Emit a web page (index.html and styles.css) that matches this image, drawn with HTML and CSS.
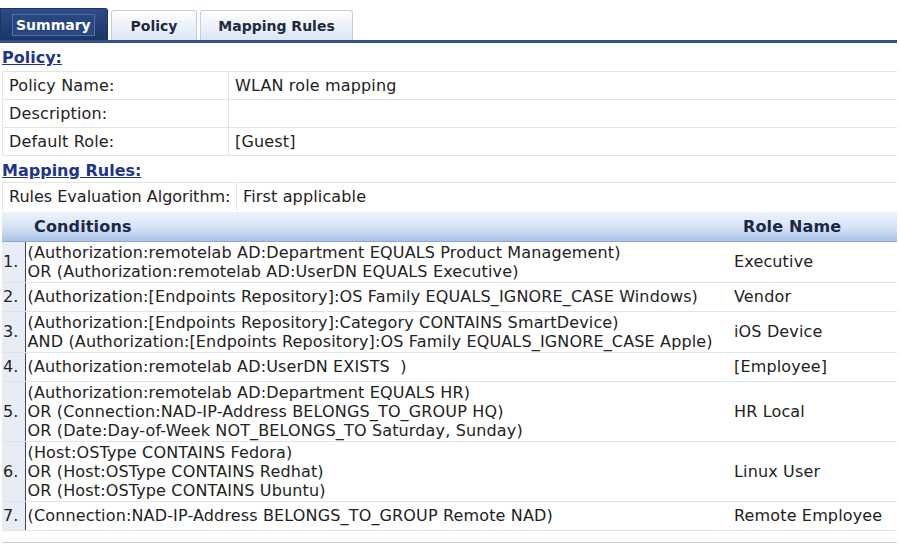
FILE: index.html
```html
<!DOCTYPE html>
<html lang="en">
<head>
  <meta charset="UTF-8" />
  <title>Authorization Policy – Summary</title>
  <link rel="stylesheet" href="styles.css">
</head>
<body>
  <div class="tabs">
    <div class="tab active"><span>Summary</span></div>
    <div class="tab">Policy</div>
    <div class="tab">Mapping Rules</div>
  </div>

  <h3 class="section-title">Policy:</h3>
  <table class="props">
    <tr><td class="label">Policy Name:</td><td>WLAN role mapping</td></tr>
    <tr><td class="label">Description:</td><td></td></tr>
    <tr><td class="label">Default Role:</td><td>[Guest]</td></tr>
  </table>

  <h3 class="section-title">Mapping Rules:</h3>
  <table class="props algo">
    <tr><td class="label">Rules Evaluation Algorithm:</td><td>First applicable</td></tr>
  </table>

  <table class="rules">
    <colgroup>
      <col class="col-num">
      <col class="col-cond">
      <col>
    </colgroup>
    <thead>
      <tr>
        <th class="num"></th>
        <th class="cond">Conditions</th>
        <th class="role">Role Name</th>
      </tr>
    </thead>
    <tbody>
      <tr>
        <td class="num">1.</td>
        <td class="cond">(Authorization:remotelab AD:Department EQUALS Product Management)<br>OR (Authorization:remotelab AD:UserDN EQUALS Executive)</td>
        <td class="role">Executive</td>
      </tr>
      <tr>
        <td class="num">2.</td>
        <td class="cond">(Authorization:[Endpoints Repository]:OS Family EQUALS_IGNORE_CASE Windows)</td>
        <td class="role">Vendor</td>
      </tr>
      <tr>
        <td class="num">3.</td>
        <td class="cond">(Authorization:[Endpoints Repository]:Category CONTAINS SmartDevice)<br>AND (Authorization:[Endpoints Repository]:OS Family EQUALS_IGNORE_CASE Apple)</td>
        <td class="role">iOS Device</td>
      </tr>
      <tr>
        <td class="num">4.</td>
        <td class="cond">(Authorization:remotelab AD:UserDN EXISTS &nbsp;)</td>
        <td class="role">[Employee]</td>
      </tr>
      <tr>
        <td class="num">5.</td>
        <td class="cond">(Authorization:remotelab AD:Department EQUALS HR)<br>OR (Connection:NAD-IP-Address BELONGS_TO_GROUP HQ)<br>OR (Date:Day-of-Week NOT_BELONGS_TO Saturday, Sunday)</td>
        <td class="role">HR Local</td>
      </tr>
      <tr>
        <td class="num">6.</td>
        <td class="cond">(Host:OSType CONTAINS Fedora)<br>OR (Host:OSType CONTAINS Redhat)<br>OR (Host:OSType CONTAINS Ubuntu)</td>
        <td class="role">Linux User</td>
      </tr>
      <tr>
        <td class="num">7.</td>
        <td class="cond">(Connection:NAD-IP-Address BELONGS_TO_GROUP Remote NAD)</td>
        <td class="role">Remote Employee</td>
      </tr>
    </tbody>
  </table>
  <div class="footer-line"></div>
</body>
</html>
```

FILE: styles.css
```css
body {
  font-family: "DejaVu Sans", Verdana, sans-serif;
  font-size: 16px;
  letter-spacing: 0.15px;
  color: #222;
  background: #fff;
  margin: 0;
  padding: 10px 3px 0 0;
}

/* tabs */
.tabs {
  display: flex;
  align-items: flex-end;
  gap: 3px;
  height: 30px;
  border-bottom: 3px solid #34508c;
  letter-spacing: 0;
}

.tab {
  height: 30px;
  box-sizing: border-box;
  display: flex;
  align-items: center;
  justify-content: center;
  font-weight: bold;
  font-size: 14px;
  color: #1e2a40;
  background: linear-gradient(#ffffff, #dbe6f5);
  border: 1px solid #c3cfe0;
  border-bottom: none;
  border-radius: 3px 3px 0 0;
}

.tab.active {
  width: 108px;
  height: 32px;
  justify-content: flex-start;
  padding-left: 11px;
  background: linear-gradient(#2f4c86, #1c3566);
  border-color: #1c3566;
  border-radius: 0 3px 0 0;
  color: #fff;
}

.tab.active span {
  padding: 2px 3px;
  border: 1px solid #4d6fae;
  background: #284680;
}

.tab:nth-child(2) {
  width: 86px;
}

.tab:nth-child(3) {
  width: 153px;
}

.section-title {
  margin: 0;
  padding: 6px 0 0 2px;
  font-size: 16px;
  line-height: 18px;
  font-weight: bold;
  color: #22338a;
  text-decoration: underline;
  letter-spacing: 0;
}

/* property tables */
.props {
  width: 895px;
  margin: 4px 0 0 2px;
  border-collapse: collapse;
}

.props td {
  height: 28px;
  padding: 0 6px;
  border: 1px solid #e1e5eb;
  border-right: none;
  box-sizing: border-box;
  white-space: nowrap;
}

.props .label {
  width: 226px;
}

.algo {
  margin-top: 2px;
}

.algo .label {
  width: 234px;
  padding-right: 2px;
  letter-spacing: 0;
}

.algo td {
  border-bottom: none;
}

/* rules table */
.rules {
  width: 895px;
  margin: 1px 0 0 2px;
  border-collapse: collapse;
  table-layout: fixed;
}

.col-num {
  width: 23px;
}

.col-cond {
  width: 704px;
}

.rules th {
  height: 29px;
  text-align: left;
  font-weight: bold;
  color: #1b2844;
  background: linear-gradient(#eef3fb, #d5e2f5 55%, #a9c3e8);
  border-bottom: 1px solid #8ea8d0;
  padding: 0;
}

.rules th.cond {
  padding-left: 9px;
}

.rules th.role {
  padding-left: 14px;
}

.rules td {
  line-height: 19px;
  padding: 1px 0 1px;
  border-bottom: 1px solid #dfe3ea;
  height: 26px;
  white-space: nowrap;
}

.rules .num {
  padding-left: 1px;
  background: #e8ecf4;
  border-right: 1px solid #3a4360;
  text-align: left;
}

.rules th.num {
  background: linear-gradient(#eef3fb, #d5e2f5 55%, #a9c3e8);
  border-right: none;
}

.rules .cond {
  padding-left: 2px;
}

.rules .role {
  padding-left: 5px;
}

.footer-line {
  margin: 11px 0 0 2px;
  width: 895px;
  border-top: 1px solid #c8ccd4;
}
```
